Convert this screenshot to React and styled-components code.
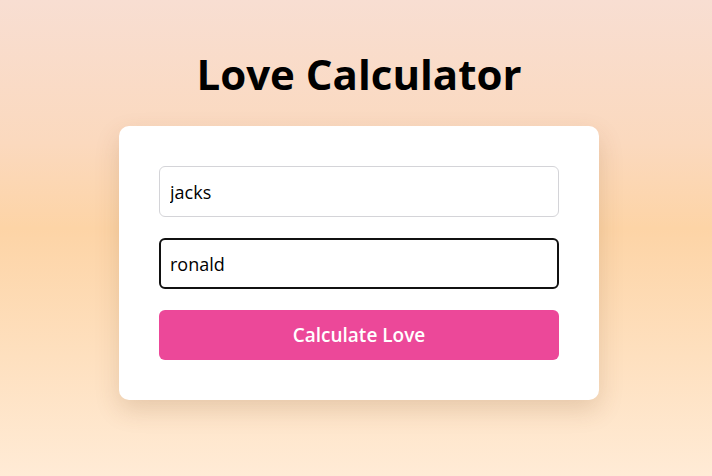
import React, { useState } from "react";
import styled, { createGlobalStyle } from "styled-components";

export default function App() {
  const [first, setFirst] = useState("jacks");
  const [second, setSecond] = useState("ronald");
  return (
    <>
      <GlobalStyle />
      <Page>
        <Title>Love Calculator</Title>
        <Card>
          <Field value={first} onChange={e => setFirst(e.target.value)} />
          <Field
            focused
            value={second}
            onChange={e => setSecond(e.target.value)}
          />
          <CalcButton>Calculate Love</CalcButton>
        </Card>
      </Page>
    </>
  );
}

const GlobalStyle = createGlobalStyle`
  html, body {
    margin: 0;
    padding: 0;
  }
  body {
    font-family: "Open Sans", "Noto Sans", sans-serif;
  }
`;

const Page = styled.div`
  min-height: 476px;
  box-sizing: border-box;
  display: flex;
  flex-direction: column;
  align-items: center;
  padding: 46px 0 0 6px;
  background: linear-gradient(
    180deg,
    #f8ded2 0%,
    #fbd9be 30%,
    #fdd4a6 48%,
    #fee0bf 75%,
    #ffebd6 100%
  );
`;

const Title = styled.h1`
  margin: 0 0 24px;
  font-size: 42px;
  line-height: 56px;
  font-weight: 700;
  color: #000;
`;

const Card = styled.div`
  width: 480px;
  box-sizing: border-box;
  padding: 40px;
  background: #fff;
  border-radius: 10px;
  box-shadow: 0 10px 25px rgba(120, 80, 40, 0.18);
  display: flex;
  flex-direction: column;
  gap: 21px;
`;

const Field = styled.input.withConfig({
  shouldForwardProp: p => p !== "focused"
})`
  box-sizing: border-box;
  width: 100%;
  height: 51px;
  padding: 0 10px;
  font-family: "Open Sans", "Noto Sans", sans-serif;
  font-size: 18px;
  color: #000;
  background: #fff;
  border: ${p => (p.focused ? "2px solid #111" : "1px solid #d4d4d8")};
  padding-left: ${p => (p.focused ? "9px" : "10px")};
  border-radius: 6px;
  outline: none;
`;

const CalcButton = styled.button`
  height: 50px;
  border: none;
  border-radius: 6px;
  background: #ec4899;
  color: #fff;
  font-family: "Open Sans", "Noto Sans", sans-serif;
  font-size: 19px;
  font-weight: 600;
  cursor: pointer;
`;
